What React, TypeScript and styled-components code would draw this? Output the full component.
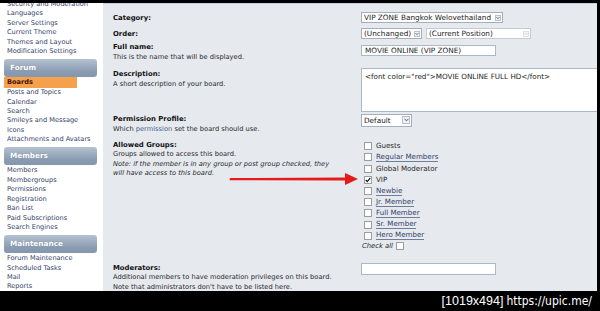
import React from "react";
import styled, { createGlobalStyle } from "styled-components";

const GlobalStyle = createGlobalStyle`
  html, body { margin: 0; padding: 0; background: #000; }
  body { width: 600px; height: 311px; overflow: hidden; font-family: "DejaVu Sans", Verdana, sans-serif; }
  * { box-sizing: border-box; }
`;

const Frame = styled.div`
  width: 600px;
  height: 311px;
  background: #000;
  display: flex;
  flex-direction: column;
  overflow: hidden;
`;

const Screen = styled.div`
  position: relative;
  margin: 3px 3px 0 0;
  height: 288px;
  display: flex;
  background: #fff;
  overflow: hidden;
`;

const Sidebar = styled.nav`
  width: 103px;
  flex: none;
  padding: 0 6px 0 4px;
  margin-top: -3px;
  font-size: 6.6px;
  line-height: 9.4px;
`;

const SideLink = styled.a<{ $active?: boolean }>`
  display: block;
  padding-left: 3px;
  color: ${(p) => (p.$active ? "#4a1400" : "#34426a")};
  font-weight: ${(p) => (p.$active ? "bold" : "normal")};
  background: ${(p) => (p.$active ? "#f4a04c" : "transparent")};
  margin-right: ${(p) => (p.$active ? "20px" : "0")};
  line-height: ${(p) => (p.$active ? "11px" : "9.4px")};
  margin-top: ${(p) => (p.$active ? "-1px" : "0")};
  text-decoration: none;
  white-space: nowrap;
`;

const SideHeader = styled.h3`
  margin: 2.8px 0 0;
  height: 18px;
  line-height: 18px;
  padding-left: 6px;
  border-radius: 3px;
  background: linear-gradient(#b4c2d1, #8a9cb2 70%, #8397ae);
  color: #fff;
  font-size: 7.3px;
  font-weight: bold;
  text-shadow: 0 0 1px rgba(60, 70, 90, 0.4);
`;

const SideList = styled.div`
  padding-top: 1px;
`;

const Main = styled.main`
  position: relative;
  flex: 1;
  min-width: 0;
  background: #e6e9ee;
  border-top: 1px solid #c3cfdc;
  padding-left: 10px;
  overflow: hidden;
  color: #2a2a2a;
  font-size: 6.7px;
  line-height: 9.6px;
`;

const Row = styled.div<{ $mt: number }>`
  display: grid;
  grid-template-columns: 248px 1fr;
  align-items: start;
  margin-top: ${(p) => p.$mt}px;
`;

const Term = styled.div<{ $pt?: number }>`
  padding-top: ${(p) => p.$pt ?? 0}px;
`;

const Title = styled.strong`
  display: block;
  font-size: 6.9px;
  font-weight: bold;
  color: #111;
`;

const Hint = styled.span<{ $italic?: boolean }>`
  display: block;
  font-style: ${(p) => (p.$italic ? "italic" : "normal")};
  white-space: nowrap;
`;

const InlineLink = styled.a`
  color: #4c5f8c;
  text-decoration: none;
`;

const Def = styled.div<{ $pt?: number }>`
  padding-top: ${(p) => p.$pt ?? 0}px;
  display: flex;
  align-items: center;
  gap: 4px;
`;

const Select = styled.div<{ $w: number; $h: number; $dim?: boolean }>`
  display: inline-flex;
  align-items: center;
  width: ${(p) => p.$w}px;
  height: ${(p) => p.$h}px;
  padding: 0 1px 0 2px;
  background: #fff;
  border: 1px solid ${(p) => (p.$dim ? "#c4cbd3" : "#a5afbb")};
  font-size: 7.3px;
  color: #222;
  white-space: nowrap;
  flex: none;
`;

const SelectText = styled.span`
  flex: 1;
  overflow: hidden;
`;

const ArrowBox = styled.span<{ $dim?: boolean; $s: number }>`
  display: inline-flex;
  align-items: center;
  justify-content: center;
  width: ${(p) => p.$s}px;
  height: ${(p) => p.$s}px;
  border: 1px solid ${(p) => (p.$dim ? "#dde1e6" : "#b9c0c9")};
  background: ${(p) => (p.$dim ? "#f7f8f9" : "#eef0f3")};
  flex: none;
  svg {
    width: 5px;
    height: 4px;
  }
`;

const TextInput = styled.div<{ $w: number; $h: number }>`
  width: ${(p) => p.$w}px;
  height: ${(p) => p.$h}px;
  background: #fff;
  border: 1px solid #a9b9ca;
  padding: 0 3px;
  font-size: 7.3px;
  line-height: ${(p) => p.$h - 2}px;
  color: #222;
  white-space: nowrap;
  flex: none;
`;

const TextArea = styled.div`
  width: 250px;
  height: 44px;
  background: #fff;
  border: 1px solid #a9b9ca;
  padding: 3px 3px;
  font-size: 7.2px;
  line-height: 9px;
  color: #222;
  white-space: nowrap;
  flex: none;
`;

const CheckList = styled.div`
  display: flex;
  flex-direction: column;
`;

const CheckRow = styled.label<{ $h: number }>`
  display: flex;
  align-items: center;
  height: ${(p) => p.$h}px;
  font-size: 7.1px;
  color: #2a2a2a;
  white-space: nowrap;
`;

const Box = styled.span<{ $checked?: boolean; $ml?: number }>`
  display: inline-flex;
  align-items: center;
  justify-content: center;
  width: 8px;
  height: 8px;
  margin-left: ${(p) => p.$ml ?? 3}px;
  margin-right: 4px;
  border: 1px solid #9a9ea4;
  background: #fff;
  flex: none;
  svg {
    width: 6px;
    height: 6px;
  }
`;

const GroupName = styled.span<{ $linked?: boolean }>`
  color: ${(p) => (p.$linked ? "#34426a" : "#2a2a2a")};
  border-bottom: ${(p) => (p.$linked ? "1px solid #6f7d98" : "none")};
  line-height: 8px;
`;

const CheckAllText = styled.span`
  font-style: italic;
  margin-left: 1px;
  font-size: 6.8px;
`;

const RedArrow = styled.svg`
  position: absolute;
  left: 229px;
  top: 169px;
  width: 130px;
  height: 14px;
  overflow: visible;
`;

const BottomBar = styled.div`
  flex: 1;
  display: flex;
  align-items: center;
  justify-content: flex-end;
  padding-right: 8px;
  color: #fff;
  font-family: "Liberation Sans", Arial, sans-serif;
  font-size: 12.5px;
  white-space: nowrap;
`;

const Url = styled.span`
  font-family: "DejaVu Sans Condensed", "Liberation Sans Narrow", sans-serif;
  font-size: 12px;
  margin-left: 3px;
`;

const Chevron = ({ dim }: { dim?: boolean }) => (
  <svg viewBox="0 0 5 4">
    <path d="M0.6 0.8 L2.5 2.9 L4.4 0.8" fill="none" stroke={dim ? "#c0c4ca" : "#4a5060"} strokeWidth="0.9" />
  </svg>
);

const SelectBox = ({ w, h, text, dim, s = 7 }: { w: number; h: number; text: string; dim?: boolean; s?: number }) => (
  <Select $w={w} $h={h} $dim={dim}>
    <SelectText>{text}</SelectText>
    <ArrowBox $dim={dim} $s={s}>
      <Chevron dim={dim} />
    </ArrowBox>
  </Select>
);

const groups: { name: string; linked?: boolean; checked?: boolean }[] = [
  { name: "Guests" },
  { name: "Regular Members", linked: true },
  { name: "Global Moderator" },
  { name: "VIP", checked: true },
  { name: "Newbie", linked: true },
  { name: "Jr. Member", linked: true },
  { name: "Full Member", linked: true },
  { name: "Sr. Member", linked: true },
  { name: "Hero Member", linked: true },
];

const Tick = () => (
  <svg viewBox="0 0 6 6">
    <path d="M0.8 3 L2.3 4.6 L5.3 0.9" fill="none" stroke="#111" strokeWidth="1.1" />
  </svg>
);

export default function App() {
  return (
    <>
      <GlobalStyle />
      <Frame>
        <Screen>
          <Sidebar>
            <SideLink>Security and Moderation</SideLink>
            <SideLink>Languages</SideLink>
            <SideLink>Server Settings</SideLink>
            <SideLink>Current Theme</SideLink>
            <SideLink>Themes and Layout</SideLink>
            <SideLink>Modification Settings</SideLink>
            <SideHeader>Forum</SideHeader>
            <SideList>
              <SideLink $active>Boards</SideLink>
              <SideLink>Posts and Topics</SideLink>
              <SideLink>Calendar</SideLink>
              <SideLink>Search</SideLink>
              <SideLink>
                Smileys and Message
                <br />
                Icons
              </SideLink>
              <SideLink>Attachments and Avatars</SideLink>
            </SideList>
            <SideHeader>Members</SideHeader>
            <SideList>
              <SideLink>Members</SideLink>
              <SideLink>Membergroups</SideLink>
              <SideLink>Permissions</SideLink>
              <SideLink>Registration</SideLink>
              <SideLink>Ban List</SideLink>
              <SideLink>Paid Subscriptions</SideLink>
              <SideLink>Search Engines</SideLink>
            </SideList>
            <SideHeader>Maintenance</SideHeader>
            <SideList>
              <SideLink>Forum Maintenance</SideLink>
              <SideLink>Scheduled Tasks</SideLink>
              <SideLink>Mail</SideLink>
              <SideLink>Reports</SideLink>
            </SideList>
          </Sidebar>

          <Main>
            <Row $mt={8}>
              <Term $pt={2}>
                <Title>Category:</Title>
              </Term>
              <Def>
                <SelectBox w={142} h={11} s={6} text="VIP ZONE Bangkok Welovethailand" />
              </Def>
            </Row>
            <Row $mt={4.4}>
              <Term $pt={1.8}>
                <Title>Order:</Title>
              </Term>
              <Def>
                <SelectBox w={61} h={11.5} s={6} text="(Unchanged)" />
                <SelectBox w={105} h={11.5} s={6} text="(Current Position)" dim />
              </Def>
            </Row>
            <Row $mt={3.5}>
              <Term>
                <Title>Full name:</Title>
                <Hint>This is the name that will be displayed.</Hint>
              </Term>
              <Def $pt={2}>
                <TextInput $w={135} $h={11.5}>MOVIE ONLINE (VIP ZONE)</TextInput>
              </Def>
            </Row>
            <Row $mt={5.8}>
              <Term $pt={2.5}>
                <Title>Description:</Title>
                <Hint>A short description of your board.</Hint>
              </Term>
              <Def>
                <TextArea>&lt;font color="red"&gt;MOVIE ONLINE FULL HD&lt;/font&gt;</TextArea>
              </Def>
            </Row>
            <Row $mt={2}>
              <Term $pt={1.5}>
                <Title>Permission Profile:</Title>
                <Hint>
                  Which <InlineLink>permission</InlineLink> set the board should use.
                </Hint>
              </Term>
              <Def>
                <SelectBox w={51} h={13} s={8} text="Default" />
              </Def>
            </Row>
            <Row $mt={6}>
              <Term>
                <Title>Allowed Groups:</Title>
                <Hint>Groups allowed to access this board.</Hint>
                <Hint $italic>Note: if the member is in any group or post group checked, they</Hint>
                <Hint $italic>will have access to this board.</Hint>
              </Term>
              <Def>
                <CheckList>
                  {groups.map((g) => (
                    <CheckRow key={g.name} $h={11.2}>
                      <Box $checked={g.checked}>{g.checked && <Tick />}</Box>
                      <GroupName $linked={g.linked}>{g.name}</GroupName>
                    </CheckRow>
                  ))}
                  <CheckRow $h={10}>
                    <CheckAllText>Check all</CheckAllText>
                    <Box $ml={3} />
                  </CheckRow>
                </CheckList>
              </Def>
            </Row>
            <Row $mt={11.5}>
              <Term $pt={1}>
                <Title>Moderators:</Title>
                <Hint>Additional members to have moderation privileges on this board.</Hint>
                <Hint>Note that administrators don't have to be listed here.</Hint>
              </Term>
              <Def>
                <TextInput $w={135} $h={12} />
              </Def>
            </Row>
          </Main>

          <RedArrow viewBox="0 0 130 14">
            <path d="M1 8.2 Q0 7 1.5 6.1 L116 5.6 L116 1 L129 7 L116 13 L116 8.6 Z" fill="#e41b1b" />
          </RedArrow>
        </Screen>
        <BottomBar>
          [1019x494]<Url>https://upic.me/</Url>
        </BottomBar>
      </Frame>
    </>
  );
}
